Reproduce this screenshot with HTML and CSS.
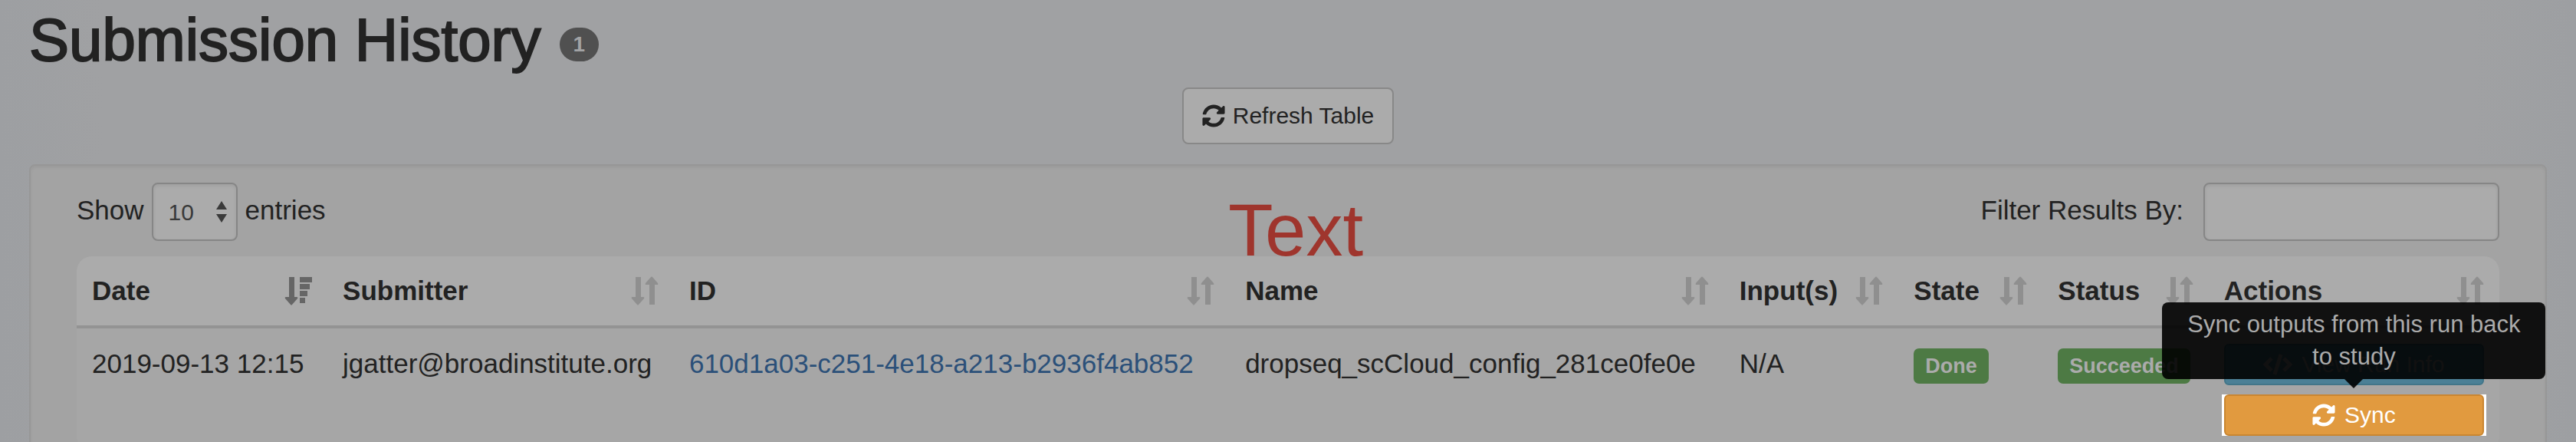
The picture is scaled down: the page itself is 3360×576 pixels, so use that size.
FILE: index.html
```html
<!DOCTYPE html>
<html lang="en">
<head>
<meta charset="utf-8">
<title>Submission History</title>
<link rel="stylesheet" href="styles.css">
</head>
<body>
<svg class="defs" aria-hidden="true">
  <symbol id="sync" viewBox="0 0 512 512"><path d="M370.72 133.28C339.458 104.008 298.888 87.962 255.848 88c-77.458.068-144.328 53.178-162.791 126.85-1.344 5.363-6.122 9.15-11.651 9.15H24.103c-7.498 0-13.194-6.807-11.807-14.176C33.933 94.924 134.813 8 256 8c66.448 0 126.791 26.136 171.315 68.685L463.03 40.97C478.149 25.851 504 36.559 504 57.941V192c0 13.255-10.745 24-24 24H345.941c-21.382 0-32.09-25.851-16.971-40.971l41.75-41.749zM32 296h134.059c21.382 0 32.09 25.851 16.971 40.971l-41.75 41.75c31.262 29.273 71.835 45.319 114.876 45.28 77.418-.07 144.315-53.144 162.787-126.849 1.344-5.363 6.122-9.15 11.651-9.15h57.304c7.498 0 13.194 6.807 11.807 14.176C478.067 417.076 377.187 504 256 504c-66.448 0-126.791-26.136-171.315-68.685L48.97 471.03C33.851 486.149 8 475.441 8 454.059V320c0-13.255 10.745-24 24-24z"/></symbol>
  <symbol id="sort" viewBox="0 0 36 38"><path d="M6 1h7v26h3q2 0 1 2l-7 8q-1 1-2 0l-7-8q-1-2 1-2h4zM24 37V11h-4q-2 0-1-2l7-8q1-1 2 0l7 8q1 2-1 2h-3v26z"/></symbol>
  <symbol id="sort-desc" viewBox="0 0 36 38"><path d="M6 1h7v26h3q2 0 1 2l-7 8q-1 1-2 0l-7-8q-1-2 1-2h4zM20 1h16v7H20zM20 10h13v7H20zM20 19h10v7H20zM20 28h7v7h-7z"/></symbol>
</svg>

<main class="page">
  <h1 class="title">Submission History <span class="count">1</span></h1>

  <div class="toolbar">
    <button class="btn btn-default" type="button"><svg class="icon"><use href="#sync"/></svg>Refresh Table</button>
  </div>

  <section class="panel">
    <div class="controls">
      <div class="length">
        <label for="length">Show</label>
        <span class="select-wrap">
          <select id="length" class="field select"><option>10</option></select>
          <svg class="carets" viewBox="0 0 14 28" aria-hidden="true"><path d="M7 0l7 11H0zM0 17h14L7 28z"/></svg>
        </span>
        <span>entries</span>
      </div>
      <div class="filter">
        <label for="filter">Filter Results By:</label>
        <input id="filter" class="field search" type="search">
      </div>
    </div>

    <table class="table">
      <colgroup>
        <col class="col-date"><col class="col-submitter"><col class="col-id"><col class="col-name">
        <col class="col-inputs"><col class="col-state"><col class="col-status"><col class="col-actions">
      </colgroup>
      <thead>
        <tr>
          <th><div class="head">Date<button class="sort sort-active" type="button" aria-label="Sort by date"><svg><use href="#sort-desc"/></svg></button></div></th>
          <th><div class="head">Submitter<button class="sort" type="button" aria-label="Sort by submitter"><svg><use href="#sort"/></svg></button></div></th>
          <th><div class="head">ID<button class="sort" type="button" aria-label="Sort by ID"><svg><use href="#sort"/></svg></button></div></th>
          <th><div class="head">Name<button class="sort" type="button" aria-label="Sort by name"><svg><use href="#sort"/></svg></button></div></th>
          <th><div class="head">Input(s)<button class="sort" type="button" aria-label="Sort by inputs"><svg><use href="#sort"/></svg></button></div></th>
          <th><div class="head">State<button class="sort" type="button" aria-label="Sort by state"><svg><use href="#sort"/></svg></button></div></th>
          <th><div class="head">Status<button class="sort" type="button" aria-label="Sort by status"><svg><use href="#sort"/></svg></button></div></th>
          <th><div class="head">Actions<button class="sort" type="button" aria-label="Sort by actions"><svg><use href="#sort"/></svg></button></div></th>
        </tr>
      </thead>
      <tbody>
        <tr>
          <td>2019-09-13 12:15</td>
          <td>jgatter@broadinstitute.org</td>
          <td><a class="link" href="#run">610d1a03-c251-4e18-a213-b2936f4ab852</a></td>
          <td>dropseq_scCloud_config_281ce0fe0e</td>
          <td>N/A</td>
          <td><span class="label">Done</span></td>
          <td><span class="label">Succeeded</span></td>
          <td>
            <div class="actions">
              <button class="btn btn-small btn-info" type="button"><svg class="icon-code" viewBox="0 0 38 30" aria-hidden="true"><path d="M11 7l-8 8 8 8M27 7l8 8-8 8M23 2l-8 26"/></svg>View Run Info</button>
              <div class="spotlight">
                <button class="btn btn-small btn-warning" type="button" aria-describedby="sync-tip"><svg class="icon"><use href="#sync"/></svg>Sync</button>
                <div class="tooltip" id="sync-tip" role="tooltip">Sync outputs from this run back to study</div>
              </div>
            </div>
          </td>
        </tr>
      </tbody>
    </table>
  </section>

  <div class="note">Text</div>
</main>
</body>
</html>
```

FILE: styles.css
```css
* {
  box-sizing: border-box;
}

html,
body {
  height: 100%;
  margin: 0;
  overflow: hidden;
}

body {
  background: linear-gradient(90deg, #9d9fa2, #a0a1a3 4%, #a0a1a3 96%, #9d9fa2);
  color: #222;
  font-family: "Liberation Sans", Arial, sans-serif;
  font-size: 35px;
  line-height: 50px;
}

button,
input,
select {
  margin: 0;
  font-family: inherit;
}

.defs {
  position: absolute;
  width: 0;
  height: 0;
}

.page {
  position: relative;
  padding: 12px 38px 0;
}

.title {
  display: flex;
  align-items: center;
  gap: 24px;
  margin: 0;
  font-size: 78px;
  font-weight: 400;
  line-height: 80px;
  -webkit-text-stroke: 2px #222;
}

.count {
  margin-top: 12px;
  padding: 0 18px;
  border-radius: 22px;
  background: #505050;
  color: #a2a3a5;
  font-size: 28px;
  font-weight: 700;
  line-height: 44px;
  -webkit-text-stroke: 0;
}

.toolbar {
  display: flex;
  justify-content: center;
  margin: 22px 0 26px;
}

.btn {
  display: flex;
  align-items: center;
  justify-content: center;
  gap: 10px;
  padding: 0 24px;
  border: 2px solid;
  border-radius: 8px;
  font-size: 30px;
  line-height: 70px;
  white-space: nowrap;
}

.btn-default {
  border-color: #888;
  background: #ababab;
  color: #222;
}

.btn-small {
  width: 100%;
  gap: 12px;
  border-radius: 6px;
  line-height: 50px;
}

.btn-info {
  border-color: #427689;
  background: #4b8096;
  color: #ababab;
}

.btn-warning {
  border-color: #c98631;
  background: #e19a3f;
  color: #fff;
}

.icon {
  width: 30px;
  height: 30px;
  fill: currentColor;
}

.icon-code {
  width: 38px;
  height: 30px;
  fill: none;
  stroke: currentColor;
  stroke-width: 5;
}

.panel {
  padding: 22px 60px 40px;
  border: 2px solid #979797;
  border-radius: 8px;
  background: #a3a3a3;
  box-shadow: inset 0 2px 4px rgba(0, 0, 0, 0.06);
}

.controls {
  display: flex;
  justify-content: space-between;
  margin-bottom: 20px;
  line-height: 72px;
}

.length {
  display: flex;
  gap: 10px;
}

.filter {
  display: flex;
  gap: 26px;
}

.field {
  height: 76px;
  border: 2px solid #868686;
  border-radius: 8px;
  background: #ababab;
  box-shadow: inset 0 2px 4px rgba(0, 0, 0, 0.08);
  color: #3a3a3a;
  font-size: 30px;
}

.select-wrap {
  position: relative;
  height: 76px;
}

.select {
  display: block;
  width: 112px;
  padding: 0 20px;
  appearance: none;
}

.carets {
  position: absolute;
  top: 24px;
  right: 14px;
  width: 14px;
  height: 28px;
  fill: #3a3a3a;
  pointer-events: none;
}

.search {
  width: 386px;
  padding: 0 24px;
}

.table {
  width: 100%;
  border-collapse: separate;
  border-spacing: 0;
  border-radius: 20px;
  background: #a6a6a6;
  table-layout: fixed;
}

.col-date { width: 10.35%; }
.col-submitter { width: 14.3%; }
.col-id { width: 22.95%; }
.col-name { width: 20.4%; }
.col-inputs { width: 7.2%; }
.col-state { width: 5.95%; }
.col-status { width: 6.85%; }
.col-actions { width: 12%; }

.table th,
.table td {
  padding: 20px;
  line-height: 52px;
  text-align: left;
  vertical-align: top;
  white-space: nowrap;
}

.table th {
  padding: 19px 20px;
  border-bottom: 4px solid #939393;
  background: #ababab;
}

.table th:first-child {
  border-top-left-radius: 20px;
}

.table th:last-child {
  border-top-right-radius: 20px;
}

.head {
  display: flex;
  align-items: center;
  justify-content: space-between;
}

.sort {
  display: flex;
  padding: 0;
  border: 0;
  background: none;
  color: #8f8f8f;
}

.sort-active {
  color: #666;
}

.sort svg {
  width: 36px;
  height: 38px;
  fill: currentColor;
}

.link {
  color: #2b5079;
  text-decoration: none;
}

.table .label {
  display: inline-block;
  padding: 0 15px;
  border-radius: 7px;
  background: #4d7a44;
  color: #ababab;
  font-size: 27px;
  font-weight: 700;
  line-height: 46px;
}

.actions {
  display: grid;
  gap: 12px;
}

.spotlight {
  position: relative;
  background: #fff;
  box-shadow: -3px 0 #fff, 3px 0 #fff;
}

.tooltip {
  position: absolute;
  bottom: calc(100% + 20px);
  left: 50%;
  width: 500px;
  margin-left: -250px;
  padding: 8px 24px;
  border-radius: 8px;
  background: rgba(0, 0, 0, 0.9);
  color: #ababab;
  font-size: 31px;
  line-height: 42px;
  text-align: center;
  white-space: normal;
}

.tooltip::after {
  position: absolute;
  top: 100%;
  left: 50%;
  margin-left: -12px;
  border: 12px solid transparent;
  border-top-color: rgba(0, 0, 0, 0.9);
  border-bottom: 0;
  content: "";
}

.note {
  position: absolute;
  top: 252px;
  left: calc(50% - 78px);
  color: #9f352d;
  font-size: 96px;
  line-height: 96px;
}
```
